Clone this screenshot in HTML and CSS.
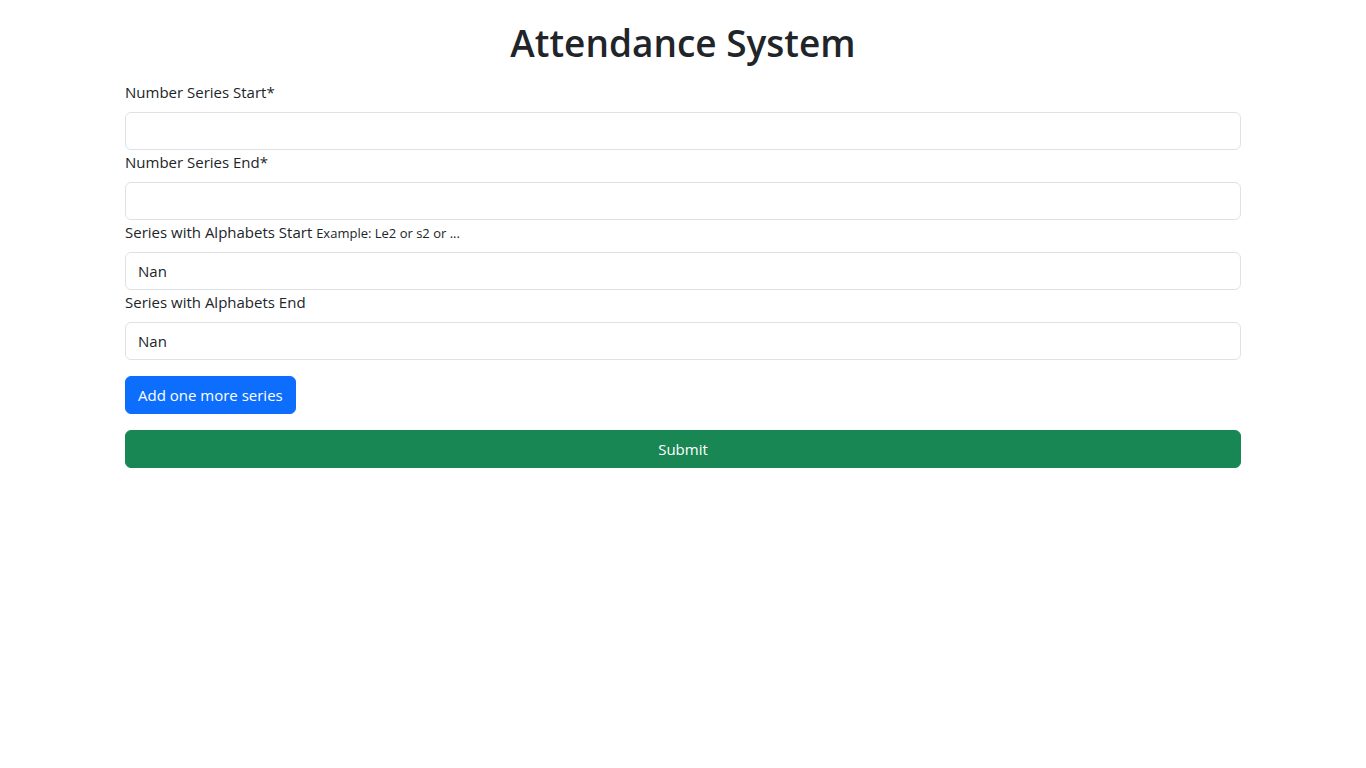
FILE: index.html
```html
<!DOCTYPE html>
<html lang="en">
<head>
<meta charset="utf-8">
<title>Attendance System</title>
<link rel="stylesheet" href="styles.css">
</head>
<body>
<div class="container">
  <h1 class="title">Attendance System</h1>
  <form class="form">
    <div class="field">
      <label class="label" for="ns">Number Series Start*</label>
      <input class="input" id="ns" type="text">
    </div>
    <div class="field">
      <label class="label" for="ne">Number Series End*</label>
      <input class="input" id="ne" type="text">
    </div>
    <div class="field">
      <label class="label" for="as">Series with Alphabets Start <small class="hint">Example: Le2 or s2 or ...</small></label>
      <input class="input" id="as" type="text" value="Nan">
    </div>
    <div class="field">
      <label class="label" for="ae">Series with Alphabets End</label>
      <input class="input" id="ae" type="text" value="Nan">
    </div>
    <div class="actions">
      <button type="button" class="btn btn-primary">Add one more series</button>
    </div>
    <button type="submit" class="btn btn-success btn-block">Submit</button>
  </form>
</div>
</body>
</html>
```

FILE: styles.css
```css
* { box-sizing: border-box; }
html, body { margin: 0; background: #fff; }
body {
  font-family: "Open Sans", "Noto Sans", "Liberation Sans", sans-serif;
  font-size: 15px;
  line-height: 24px;
  color: #212529;
}
.container {
  width: 1140px;
  margin: 0 auto;
  padding: 19px 12px 0;
}
.title {
  margin: 0 0 13px;
  font-size: 37px;
  font-weight: 600;
  line-height: 48px;
  text-align: center;
}
.form { display: flex; flex-direction: column; }
.field { display: flex; flex-direction: column; }
.label { display: block; height: 24px; margin-bottom: 8px; }
.hint { font-size: 13px; line-height: 1; }
.input {
  display: block;
  width: 100%;
  height: 38px;
  padding: 6px 12px;
  font: inherit;
  color: #212529;
  background: #fff;
  border: 1px solid #dee2e6;
  border-radius: 6px;
  outline: none;
}
.actions { margin-top: 16px; display: flex; }
.btn {
  display: inline-block;
  height: 38px;
  padding: 6px 12px;
  font: inherit;
  color: #fff;
  border: 1px solid transparent;
  border-radius: 6px;
  cursor: pointer;
}
.btn-primary { background: #0d6efd; border-color: #0d6efd; }
.btn-success { background: #198754; border-color: #198754; }
.btn-block { width: 100%; margin-top: 16px; }
```
